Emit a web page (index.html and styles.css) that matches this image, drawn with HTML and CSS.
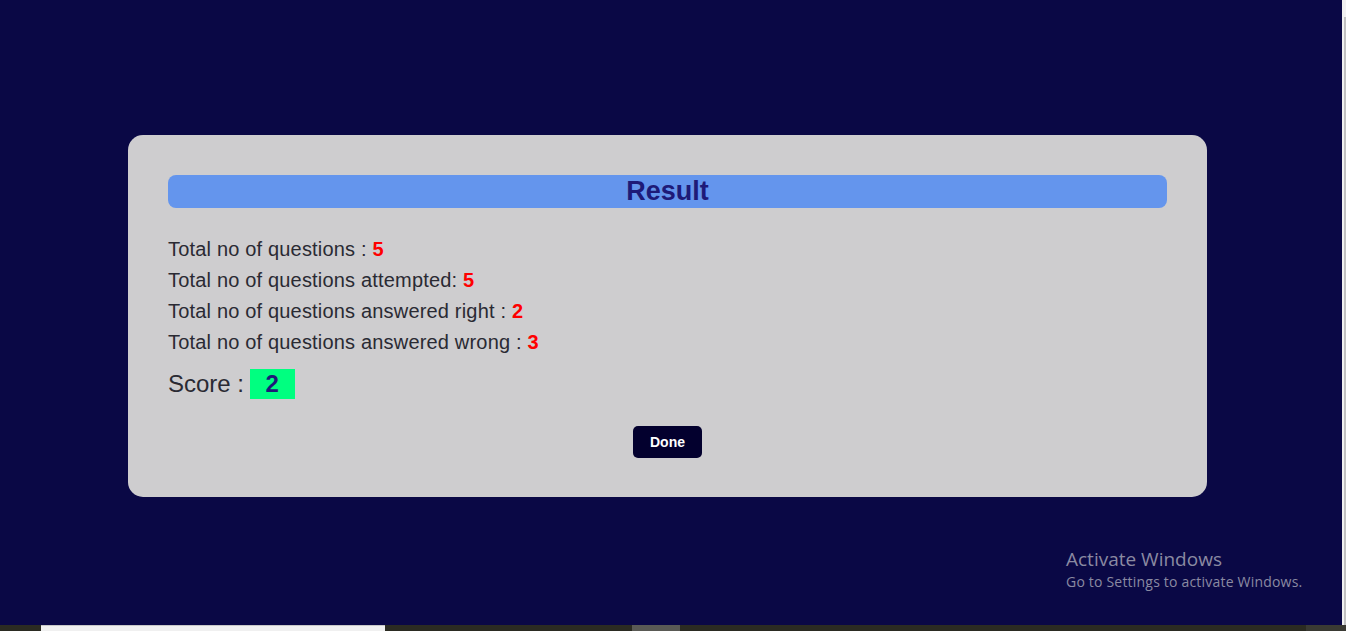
FILE: index.html
```html
<!DOCTYPE html>
<html lang="en">
<head>
<meta charset="utf-8">
<title>Result</title>
<link rel="stylesheet" href="styles.css">
</head>
<body>
<div class="page">
  <div class="card">
    <h2 class="card-title">Result</h2>
    <div class="stats">
      <p class="stat">Total no of questions : <b class="num">5</b></p>
      <p class="stat">Total no of questions attempted: <b class="num">5</b></p>
      <p class="stat">Total no of questions answered right : <b class="num">2</b></p>
      <p class="stat">Total no of questions answered wrong : <b class="num">3</b></p>
    </div>
    <div class="score-row">
      <span class="score-label">Score : </span>
      <span class="score-box">2</span>
    </div>
    <div class="actions">
      <button class="done-btn">Done</button>
    </div>
  </div>
</div>
<div class="scrollbar"><div class="scroll-top"></div><div class="scroll-track"></div></div>
<div class="taskbar">
  <div class="tb-a"></div>
  <div class="tb-white"></div>
  <div class="tb-b"></div>
  <div class="tb-grey"></div>
  <div class="tb-c"></div>
  <div class="tb-end"></div>
</div>
<div class="watermark">
  <div class="wm-title">Activate Windows</div>
  <div class="wm-sub">Go to Settings to activate Windows.</div>
</div>
</body>
</html>
```

FILE: styles.css
```css
html, body {
  margin: 0;
  padding: 0;
  height: 631px;
  overflow: hidden;
  background: #0a0845;
  font-family: "Liberation Sans", Arial, sans-serif;
}

.page {
  width: 1342px;
  height: 625px;
  padding-top: 135px;
  padding-left: 128px;
  box-sizing: border-box;
}

.card {
  width: 1079px;
  box-sizing: border-box;
  background: #cecdcf;
  border-radius: 15px;
  padding: 40px 40px 39px 40px;
}

.card-title {
  margin: 0;
  height: 33px;
  line-height: 32px;
  background: #6495ed;
  border-radius: 8px;
  text-align: center;
  font-size: 27px;
  font-weight: bold;
  color: #1e1a78;
}

.stats {
  margin-top: 26px;
}

.stat {
  margin: 0;
  font-size: 20px;
  line-height: 31px;
  letter-spacing: 0.18px;
  color: #2a2a33;
}

.num {
  color: #ff0000;
}

.score-row {
  margin-top: 11px;
  display: flex;
  align-items: center;
  height: 30px;
}

.score-label {
  font-size: 24px;
  color: #2a2a33;
  white-space: pre;
}

.score-box {
  width: 45px;
  height: 30px;
  margin-left: -1px;
  background: #00ff80;
  color: #1e1a78;
  font-size: 24px;
  font-weight: bold;
  line-height: 30px;
  text-align: center;
}

.actions {
  margin-top: 27px;
  display: flex;
  justify-content: center;
}

.done-btn {
  width: 69px;
  height: 32px;
  border: none;
  border-radius: 5px;
  background: #03002e;
  color: #ffffff;
  font-family: "Liberation Sans", Arial, sans-serif;
  font-size: 14px;
  font-weight: bold;
  padding: 0;
  margin-left: 0;
}

.scrollbar {
  position: absolute;
  top: 0;
  left: 1342px;
  width: 4px;
  height: 625px;
  display: flex;
  flex-direction: column;
}

.scroll-top {
  height: 17px;
  background: #f1f1f1;
}

.scroll-track {
  flex: 1;
  background: linear-gradient(to right, #f1f1f1 0 2px, #c1c1c1 2px);
}

.taskbar {
  position: absolute;
  left: 0;
  top: 625px;
  width: 1346px;
  height: 6px;
  display: flex;
}

.tb-a { width: 41px; background: #2b2b22; }
.tb-white { width: 344px; background: #f0f0f0; box-shadow: inset 0 1px 0 #c8c8c8; }
.tb-b { width: 247px; background: #2b2b22; }
.tb-grey { width: 48px; background: #5a5a55; }
.tb-c { width: 626px; background: #2b2b22; }
.tb-end { flex: 1; background: #3a3a33; }

.watermark {
  position: absolute;
  left: 1066px;
  top: 546px;
  color: #8a8aa2;
  font-family: "Open Sans", "Noto Sans", sans-serif;
}

.wm-title {
  font-size: 19px;
  line-height: 26px;
}

.wm-sub {
  font-size: 14px;
  line-height: 20px;
  letter-spacing: 0.2px;
}
```
